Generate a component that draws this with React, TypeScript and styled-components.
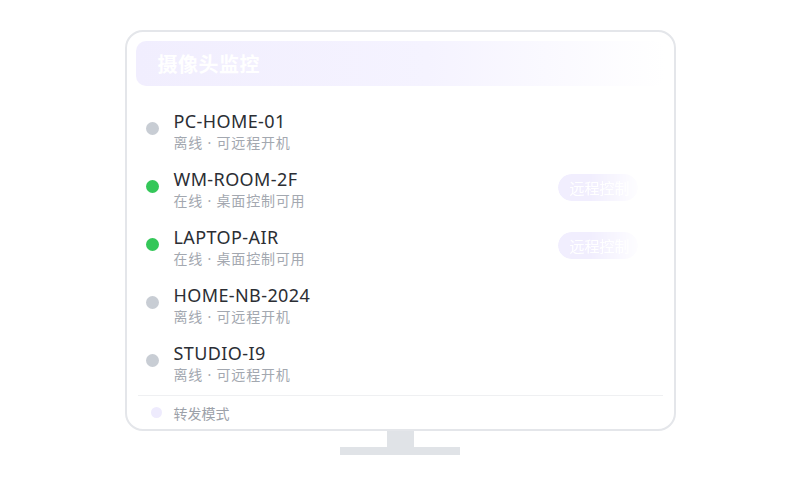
import React from 'react';
import styled, { createGlobalStyle } from 'styled-components';

const GlobalStyle = createGlobalStyle`
  html, body {
    margin: 0;
    padding: 0;
    background: #ffffff;
    font-family: "Noto Sans", "Noto Sans CJK SC", sans-serif;
  }
`;

const Page = styled.div`
  width: 800px;
  height: 500px;
  display: flex;
  flex-direction: column;
  align-items: center;
  padding-top: 30px;
  box-sizing: border-box;
`;

const Screen = styled.div`
  width: 551px;
  height: 401px;
  box-sizing: border-box;
  border: 2px solid #e4e6ea;
  border-radius: 18px;
  padding: 9px 9px 0 9px;
  display: flex;
  flex-direction: column;
  background: #ffffff;
`;

const Header = styled.div`
  height: 45px;
  border-radius: 10px;
  background: linear-gradient(90deg, #f1eefe 0%, #f5f3ff 55%, rgba(250, 249, 255, 0) 100%);
  display: flex;
  align-items: center;
  padding: 0 22px;
  flex-shrink: 0;
`;

const Title = styled.h1`
  margin: 0;
  font-size: 20px;
  font-weight: 700;
  color: #ffffff;
  letter-spacing: 0.5px;
`;

const List = styled.div`
  display: flex;
  flex-direction: column;
  padding: 23px 27px 0 9px;
  gap: 11px;
`;

const Row = styled.div`
  display: flex;
  align-items: flex-start;
  height: 47px;
`;

const Dot = styled.span<{ $online: boolean }>`
  width: 13px;
  height: 13px;
  border-radius: 50%;
  background: ${({ $online }) => ($online ? '#34c759' : '#c8cdd4')};
  margin: 13px 15px 0 1px;
  flex-shrink: 0;
`;

const Info = styled.div`
  display: flex;
  flex-direction: column;
  flex-grow: 1;
`;

const Name = styled.div`
  font-size: 18px;
  font-weight: 400;
  color: #2b2e34;
  letter-spacing: 0.4px;
  line-height: 24px;
`;

const Status = styled.div`
  font-size: 14px;
  color: #a3a8b0;
  line-height: 20px;
  letter-spacing: 0.8px;
`;

const RemoteButton = styled.button`
  margin-top: 7px;
  height: 27px;
  width: 80px;
  padding: 0 0 0 12px;
  text-align: left;
  border: none;
  border-radius: 14px;
  background: #f1eefe;
  color: #ffffff;
  font-family: "Noto Sans CJK SC", "Noto Sans", sans-serif;
  font-size: 15px;
  white-space: nowrap;
  overflow: hidden;
  -webkit-mask-image: linear-gradient(90deg, #000 40%, rgba(0, 0, 0, 0.1) 100%);
  mask-image: linear-gradient(90deg, #000 40%, rgba(0, 0, 0, 0.1) 100%);
`;

const Footer = styled.div`
  margin-top: auto;
  border-top: 1px solid #eff0f2;
  height: 33px;
  display: flex;
  align-items: center;
  padding-left: 13px;
  margin-left: 2px;
  margin-right: 2px;
`;

const FooterDot = styled.span`
  width: 11px;
  height: 11px;
  border-radius: 50%;
  background: #eeebfd;
  margin-right: 12px;
`;

const FooterText = styled.span`
  font-size: 14px;
  color: #9ca1a9;
`;

const Neck = styled.div`
  width: 27px;
  height: 16px;
  background: #e0e3e7;
`;

const Base = styled.div`
  width: 120px;
  height: 8px;
  background: #e0e3e7;
`;

const devices = [
  { name: 'PC-HOME-01', online: false },
  { name: 'WM-ROOM-2F', online: true },
  { name: 'LAPTOP-AIR', online: true },
  { name: 'HOME-NB-2024', online: false },
  { name: 'STUDIO-I9', online: false },
];

export default function App() {
  return (
    <>
      <GlobalStyle />
      <Page>
        <Screen>
          <Header>
            <Title>摄像头监控</Title>
          </Header>
          <List>
            {devices.map((d) => (
              <Row key={d.name}>
                <Dot $online={d.online} />
                <Info>
                  <Name>{d.name}</Name>
                  <Status>{d.online ? '在线 · 桌面控制可用' : '离线 · 可远程开机'}</Status>
                </Info>
                {d.online && <RemoteButton>远程控制</RemoteButton>}
              </Row>
            ))}
          </List>
          <Footer>
            <FooterDot />
            <FooterText>转发模式</FooterText>
          </Footer>
        </Screen>
        <Neck />
        <Base />
      </Page>
    </>
  );
}
